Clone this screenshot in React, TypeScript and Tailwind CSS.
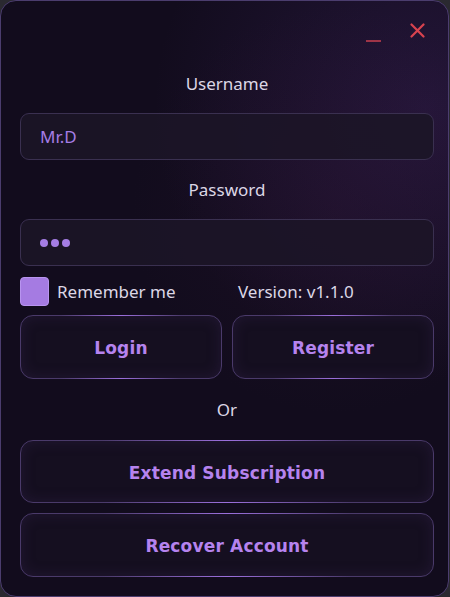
import type { ReactNode } from "react";

function Label({ children, className = "" }: { children: ReactNode; className?: string }) {
  return (
    <div
      className={`h-6 text-center text-[17px] leading-6 text-[#dcd7e6] font-['Noto_Sans',sans-serif] ${className}`}
    >
      {children}
    </div>
  );
}

function Field({ children, className = "" }: { children: ReactNode; className?: string }) {
  return (
    <div
      className={`flex h-[47px] items-center rounded-[9px] border border-[#3a3050] bg-[#1c1527]/90 px-[19px] ${className}`}
    >
      {children}
    </div>
  );
}

function GlowButton({ children, className = "" }: { children: ReactNode; className?: string }) {
  return (
    <button
      type="button"
      className={`relative flex items-center justify-center rounded-[13px] border border-[#4a3a6a] bg-[#150f20] pt-[4px] font-['DejaVu_Sans',sans-serif] text-[17px] font-bold tracking-[0.01em] text-[#b583ee] shadow-[inset_0_0_14px_rgba(60,40,90,0.35)] ${className}`}
    >
      <span className="pointer-events-none absolute inset-x-[20%] -top-px h-px bg-gradient-to-r from-transparent via-[#9b6fdc] to-transparent" />
      <span className="pointer-events-none absolute inset-x-[20%] -bottom-px h-px bg-gradient-to-r from-transparent via-[#9b6fdc] to-transparent" />
      {children}
    </button>
  );
}

export default function App() {
  return (
    <div className="h-[597px] w-[450px] bg-[#2a2930]">
      <div className="relative flex h-full w-[449px] flex-col overflow-hidden rounded-[16px] border border-[#4b3d6e] bg-[#120c1d] pl-[19px] pr-[14px]">
        <div className="pointer-events-none absolute inset-0 bg-[radial-gradient(circle_at_95%_18%,rgba(70,40,110,0.35),transparent_42%)]" />
        <div className="pointer-events-none absolute inset-0 bg-[radial-gradient(circle_at_75%_35%,rgba(60,25,60,0.2),transparent_40%)]" />

        <div className="relative flex h-[59px] items-center justify-end gap-[29px] pr-[9px]">
          <svg width="15" height="16" viewBox="0 0 15 16" className="mt-[8px]">
            <line x1="0" y1="14" x2="15" y2="14" stroke="#c9404f" strokeWidth="1.6" />
          </svg>
          <svg width="15" height="15" viewBox="0 0 15 15" className="mb-[1px]">
            <path d="M1.5 1.5 L13.5 13.5 M13.5 1.5 L1.5 13.5" stroke="#d8434f" strokeWidth="2.2" strokeLinecap="round" />
          </svg>
        </div>

        <div className="relative flex flex-col">
          <Label className="mt-[12px]">Username</Label>
          <Field className="mt-[17px]">
            <span className="font-['Noto_Sans',sans-serif] text-[17px] text-[#a57de4]">Mr.D</span>
          </Field>

          <Label className="mt-[18px]">Password</Label>
          <Field className="mt-[17px] gap-[3px]">
            <span className="h-[8px] w-[8px] rounded-full bg-[#a57de4]" />
            <span className="h-[8px] w-[8px] rounded-full bg-[#a57de4]" />
            <span className="h-[8px] w-[8px] rounded-full bg-[#a57de4]" />
          </Field>

          <div className="mt-[11px] flex h-[29px] items-center font-['Noto_Sans',sans-serif] text-[17px] text-[#dcd7e6]">
            <span className="h-[29px] w-[29px] rounded-[4px] border border-[#b894ef] bg-[#a57be2]" />
            <span className="ml-[8px] w-[181px]">Remember me</span>
            <span>Version: v1.1.0</span>
          </div>

          <div className="mt-[9px] grid h-[64px] grid-cols-2 gap-[10px]">
            <GlowButton>Login</GlowButton>
            <GlowButton>Register</GlowButton>
          </div>

          <Label className="mt-[19px]">Or</Label>

          <GlowButton className="mt-[18px] h-[63px]">Extend Subscription</GlowButton>
          <GlowButton className="mt-[10px] h-[64px]">Recover Account</GlowButton>
        </div>
      </div>
    </div>
  );
}
